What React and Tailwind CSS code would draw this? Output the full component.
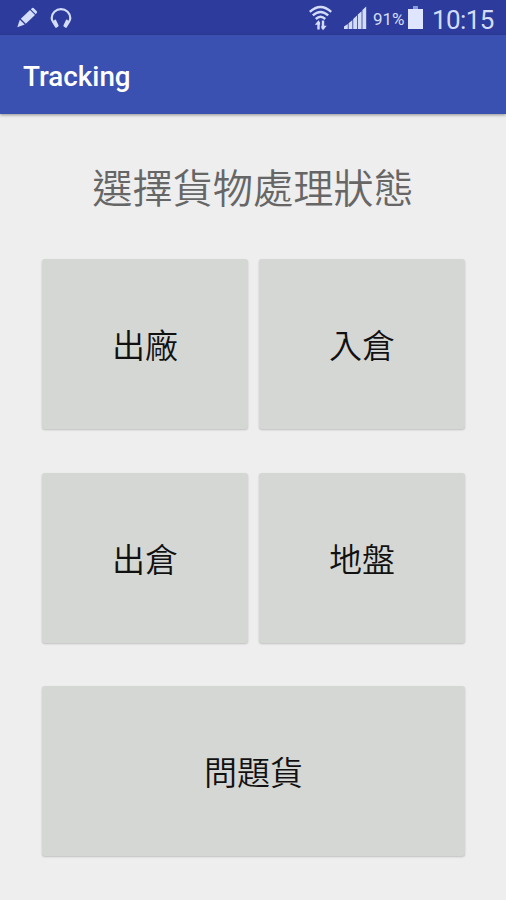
const statuses = [
  { label: "出廠" },
  { label: "入倉" },
  { label: "出倉" },
  { label: "地盤" },
  { label: "問題貨", wide: true },
];

function PencilIcon() {
  return (
    <svg width="22" height="22" viewBox="0 0 22 22" fill="#d3dcf8">
      <path d="M4.800 11.800 14 3l5 5-9.200 8.800z" />
      <path d="M14.800 2.200 16.200 1q.8-.6 1.600.2l3 3q.8.8 0 1.600L19.800 7.200z" />
      <path d="M3.800 12.800 8.700 17.600 1.300 20.200z" />
    </svg>
  );
}

function HeadphonesIcon() {
  return (
    <svg width="22" height="22" viewBox="0 0 22 22">
      <path
        d="M3.200 15C2 13.400 1.700 12.500 1.700 11a9.300 8.800 0 0 1 18.600 0c0 1.500-.3 2.400-1.500 4"
        fill="none"
        stroke="#d3dcf8"
        strokeWidth="2.200"
      />
      <path
        d="M2.200 15.500 5 12.600q.6-.5 1 .3l2.500 5.300q.3.700-.3 1.200l-1.700 1.300q-.6.4-1.200-.2zM19.800 15.500 17 12.600q-.6-.5-1 .3l-2.500 5.300q-.3.700.3 1.200l1.700 1.300q.6.4 1.200-.2z"
        fill="#d3dcf8"
      />
    </svg>
  );
}

function WifiIcon() {
  return (
    <svg width="24" height="26" viewBox="0 0 24 26" fill="none" stroke="#d3dcf8">
      <path
        d="M.8 6.800Q11.500-3 22.200 6.800M3.800 10.400Q11.500 3.400 19.200 10.400M6.800 14Q11.500 9.600 16.200 14"
        strokeWidth="2.400"
      />
      <path d="M9.500 24.500V17M14 15.500v8" strokeWidth="2.400" />
      <path
        d="M5.800 19.800 9.500 15.200l1.600 2.300v2.300zM17.700 20.700 14 25.300l-1.600-2.300v-2.300z"
        fill="#d3dcf8"
        stroke="none"
      />
    </svg>
  );
}

function SignalIcon() {
  return (
    <svg width="24" height="24" viewBox="0 0 24 24" fill="#d3dcf8">
      <path d="M0 20.500 3.800 18v5H0z" />
      <path d="M4.600 17.200 8.400 14v9H4.600z" />
      <path d="M9.200 13 13 9.600V23H9.200z" />
      <path d="M13.800 8.600 17.600 5.200V23h-3.800z" />
      <path d="M18.400 4 22.200.6V23h-3.800z" />
    </svg>
  );
}

function BatteryIcon() {
  return (
    <svg width="15" height="23" viewBox="0 0 15 23">
      <path d="M5 0h5v3H5z" fill="#8b9ad8" />
      <path d="M0 3h15v20H0z" fill="#dfe5fc" />
    </svg>
  );
}

function StatusBar() {
  return (
    <div className="flex h-[35px] items-center bg-[#2d3c9c] text-[#d3dcf8]">
      <div className="flex items-center gap-3 pl-4">
        <PencilIcon />
        <HeadphonesIcon />
      </div>
      <div className="ml-auto flex items-center pr-3">
        <WifiIcon />
        <div className="ml-[11px]">
          <SignalIcon />
        </div>
        <span className="ml-[5px] w-[34px] whitespace-nowrap pt-[3px] text-[17px] leading-none">
          91%
        </span>
        <div className="ml-px">
          <BatteryIcon />
        </div>
        <span className="ml-[9px] w-[62px] whitespace-nowrap pt-1 text-[26px] leading-none tracking-[-0.6px]">
          10:15
        </span>
      </div>
    </div>
  );
}

function StatusButton({ label, wide }) {
  return (
    <button
      className={`h-[170px] rounded-[3px] bg-[#d5d7d4] pt-1.5 text-[33px] font-[350] text-[#111] shadow-[0_1px_2px_rgba(0,0,0,0.2)] ${
        wide ? "col-span-2" : ""
      }`}
    >
      {label}
    </button>
  );
}

export default function App() {
  return (
    <div className="h-[900px] w-[506px] overflow-hidden bg-[#eee] font-[Roboto,'Noto_Sans_CJK_TC',sans-serif]">
      <StatusBar />
      <header className="flex h-[79px] items-center bg-[#3b51b1] pl-[23px] pt-1 shadow-[0_1px_3px_rgba(0,0,0,0.4)]">
        <h1 className="text-[27.800px] font-medium text-white">Tracking</h1>
      </header>

      <main className="px-[42px]">
        <h2 className="flex h-[145px] items-center justify-center pt-2 text-[40.200px] font-[350] text-[#666]">
          選擇貨物處理狀態
        </h2>
        <div className="grid grid-cols-[206px_206px] gap-x-[11px] gap-y-[43.500px]">
          {statuses.map((status) => (
            <StatusButton key={status.label} {...status} />
          ))}
        </div>
      </main>
    </div>
  );
}
